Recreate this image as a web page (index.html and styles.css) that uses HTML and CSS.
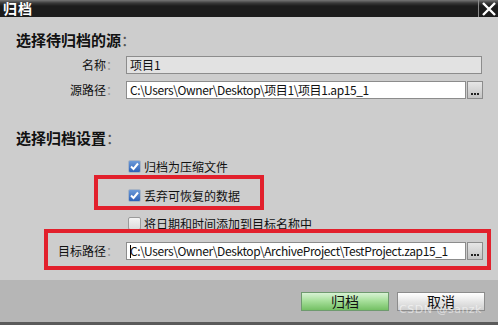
FILE: index.html
```html
<!DOCTYPE html>
<html lang="zh-CN">
<head>
  <meta charset="UTF-8">
  <title>归档</title>
  <link rel="stylesheet" href="styles.css">
</head>
<body>
<div class="dialog">
  <div class="titlebar">
    <span class="title">归档</span>
    <span class="close">
      <svg width="16" height="14" viewBox="0 0 16 14"><path d="M2 1 L14 13 M14 1 L2 13" stroke="#fff" stroke-width="2.4" fill="none"/></svg>
    </span>
  </div>

  <div class="content">
    <h2 class="group-title">选择待归档的源<span class="colon">：</span></h2>
    <div class="row">
      <label class="label">名称<span class="colon">：</span></label>
      <div class="field readonly wide">项目1</div>
    </div>
    <div class="row">
      <label class="label">源路径<span class="colon">：</span></label>
      <div class="field">C:\Users\Owner\Desktop\项目1\项目1.ap15_1</div>
      <span class="browse"><i></i><i></i><i></i></span>
    </div>

    <h2 class="group-title second">选择归档设置<span class="colon">：</span></h2>
    <div class="check-row">
      <span class="checkbox checked"></span>
      <span>归档为压缩文件</span>
    </div>
    <div class="check-row">
      <span class="checkbox checked"></span>
      <span>丢弃可恢复的数据</span>
    </div>
    <div class="check-row">
      <span class="checkbox"></span>
      <span>将日期和时间添加到目标名称中</span>
    </div>
    <div class="row target">
      <label class="label">目标路径<span class="colon">：</span></label>
      <div class="field"><span class="caret"></span>C:\Users\Owner\Desktop\ArchiveProject\TestProject.zap15_1</div>
      <span class="browse"><i></i><i></i><i></i></span>
    </div>

    <div class="mark mark-discard"></div>
    <div class="mark mark-target"></div>
  </div>

  <div class="footer">
    <button class="btn primary">归档</button>
    <button class="btn">取消</button>
    <span class="watermark">CSDN @sanzk</span>
  </div>
  <div class="edge"></div>
</div>
</body>
</html>
```

FILE: styles.css
```css
* { box-sizing: border-box; margin: 0; padding: 0; }
body {
  width: 498px;
  height: 325px;
  overflow: hidden;
  font-family: "Noto Sans CJK SC", "Noto Sans", sans-serif;
  font-size: 12px;
  color: #111;
  background: #cdcdcd;
}
.dialog { display: flex; flex-direction: column; height: 325px; }

.titlebar {
  height: 17px;
  display: flex;
  justify-content: space-between;
  align-items: center;
  background: linear-gradient(#767676 0, #3a3a3a 3px, #1c1c1c 6px, #1c1c1c 100%);
}
.title { color: #fff; font-size: 14px; line-height: 17px; padding-left: 3px; font-weight: bold; letter-spacing: 1px; }
.close {
  height: 17px;
  width: 20px;
  display: flex;
  align-items: center;
  justify-content: center;
  border-left: 1px solid #8a8a8a;
}

.content { position: relative; flex: 1; padding: 14px 0 0 0; }
.group-title {
  font-size: 15px;
  font-weight: bold;
  line-height: 18px;
  padding-left: 16px;
  color: #111;
}
.group-title .colon { font-weight: normal; color: #555; }
.group-title.second { margin-top: 30px; }
.colon { color: #8a8a8a; }

.row { display: flex; align-items: center; height: 18px; margin-top: 7px; }
.group-title + .row { margin-top: 7px; }
.label { width: 118px; text-align: right; margin-right: 8px; line-height: 18px; }
.field {
  width: 340px;
  height: 18px;
  line-height: 16px;
  padding-left: 3px;
  background: #fff;
  border: 1px solid #8c8c8c;
  white-space: nowrap;
  overflow: hidden;
  letter-spacing: -0.4px;
}
.field.readonly { background: #e2e2e2; letter-spacing: 0; }
.field.wide { width: 356px; }
.caret { display: inline-block; width: 1px; height: 13px; background: #000; vertical-align: -2px; margin-right: -1px; }
.browse {
  width: 16px;
  height: 18px;
  margin-left: 1px;
  border: 1px solid #8c8c8c;
  background: linear-gradient(#e6e6e6, #c4c4c4);
  display: flex;
  align-items: flex-end;
  justify-content: center;
  gap: 1px;
  padding-bottom: 3px;
}
.browse i { width: 2px; height: 2px; background: #222; }

.check-row { display: flex; align-items: center; height: 18px; padding-left: 128px; margin-top: 10px; }
.group-title + .check-row { margin-top: 10px; }
.check-row + .check-row { margin-top: 11px; }
.check-row + .check-row + .check-row { margin-top: 10px; }
.checkbox {
  width: 13px;
  height: 13px;
  margin-right: 3px;
  border: 1px solid #9a9a9a;
  border-radius: 2px;
  background: linear-gradient(#f4f4f4, #dcdcdc);
}
.checkbox.checked {
  border-color: #a8b4c4;
  background:
    url("data:image/svg+xml;utf8,<svg xmlns='http://www.w3.org/2000/svg' width='11' height='11'><path d='M2 5.5 L4.5 8 L9 2.5' stroke='white' stroke-width='2' fill='none'/></svg>") center / 11px 11px no-repeat,
    linear-gradient(#6c9ad8, #2d62b8);
}
.row.target { margin-top: 10px; }

.mark { position: absolute; border: 4px solid #e2202c; }
.mark-discard { left: 94px; top: 158px; width: 170px; height: 35px; }
.mark-target { left: 44px; top: 212px; width: 447px; height: 41px; }

.footer {
  position: relative;
  height: 42px;
  background: #b6b6b6;
  display: flex;
  justify-content: flex-end;
  gap: 8px;
  padding: 12px 13px 0 0;
}
.btn {
  width: 88px;
  height: 19px;
  font-family: inherit;
  font-size: 14px;
  line-height: 17px;
  color: #111;
  border: 1px solid #8c8c8c;
  background: linear-gradient(#ffffff, #e4e4e4 55%, #cfcfcf);
}
.btn.primary {
  border-color: #6f9a6f;
  background: linear-gradient(#d8f2d4, #a8e09c 45%, #74c064);
}
.watermark {
  position: absolute;
  right: 16px;
  top: 23px;
  font-family: "DejaVu Sans", sans-serif;
  font-size: 11px;
  color: rgba(255, 255, 255, 0.55);
  letter-spacing: 0.5px;
}
.edge { height: 3px; background: #5a5a5a; }
```
